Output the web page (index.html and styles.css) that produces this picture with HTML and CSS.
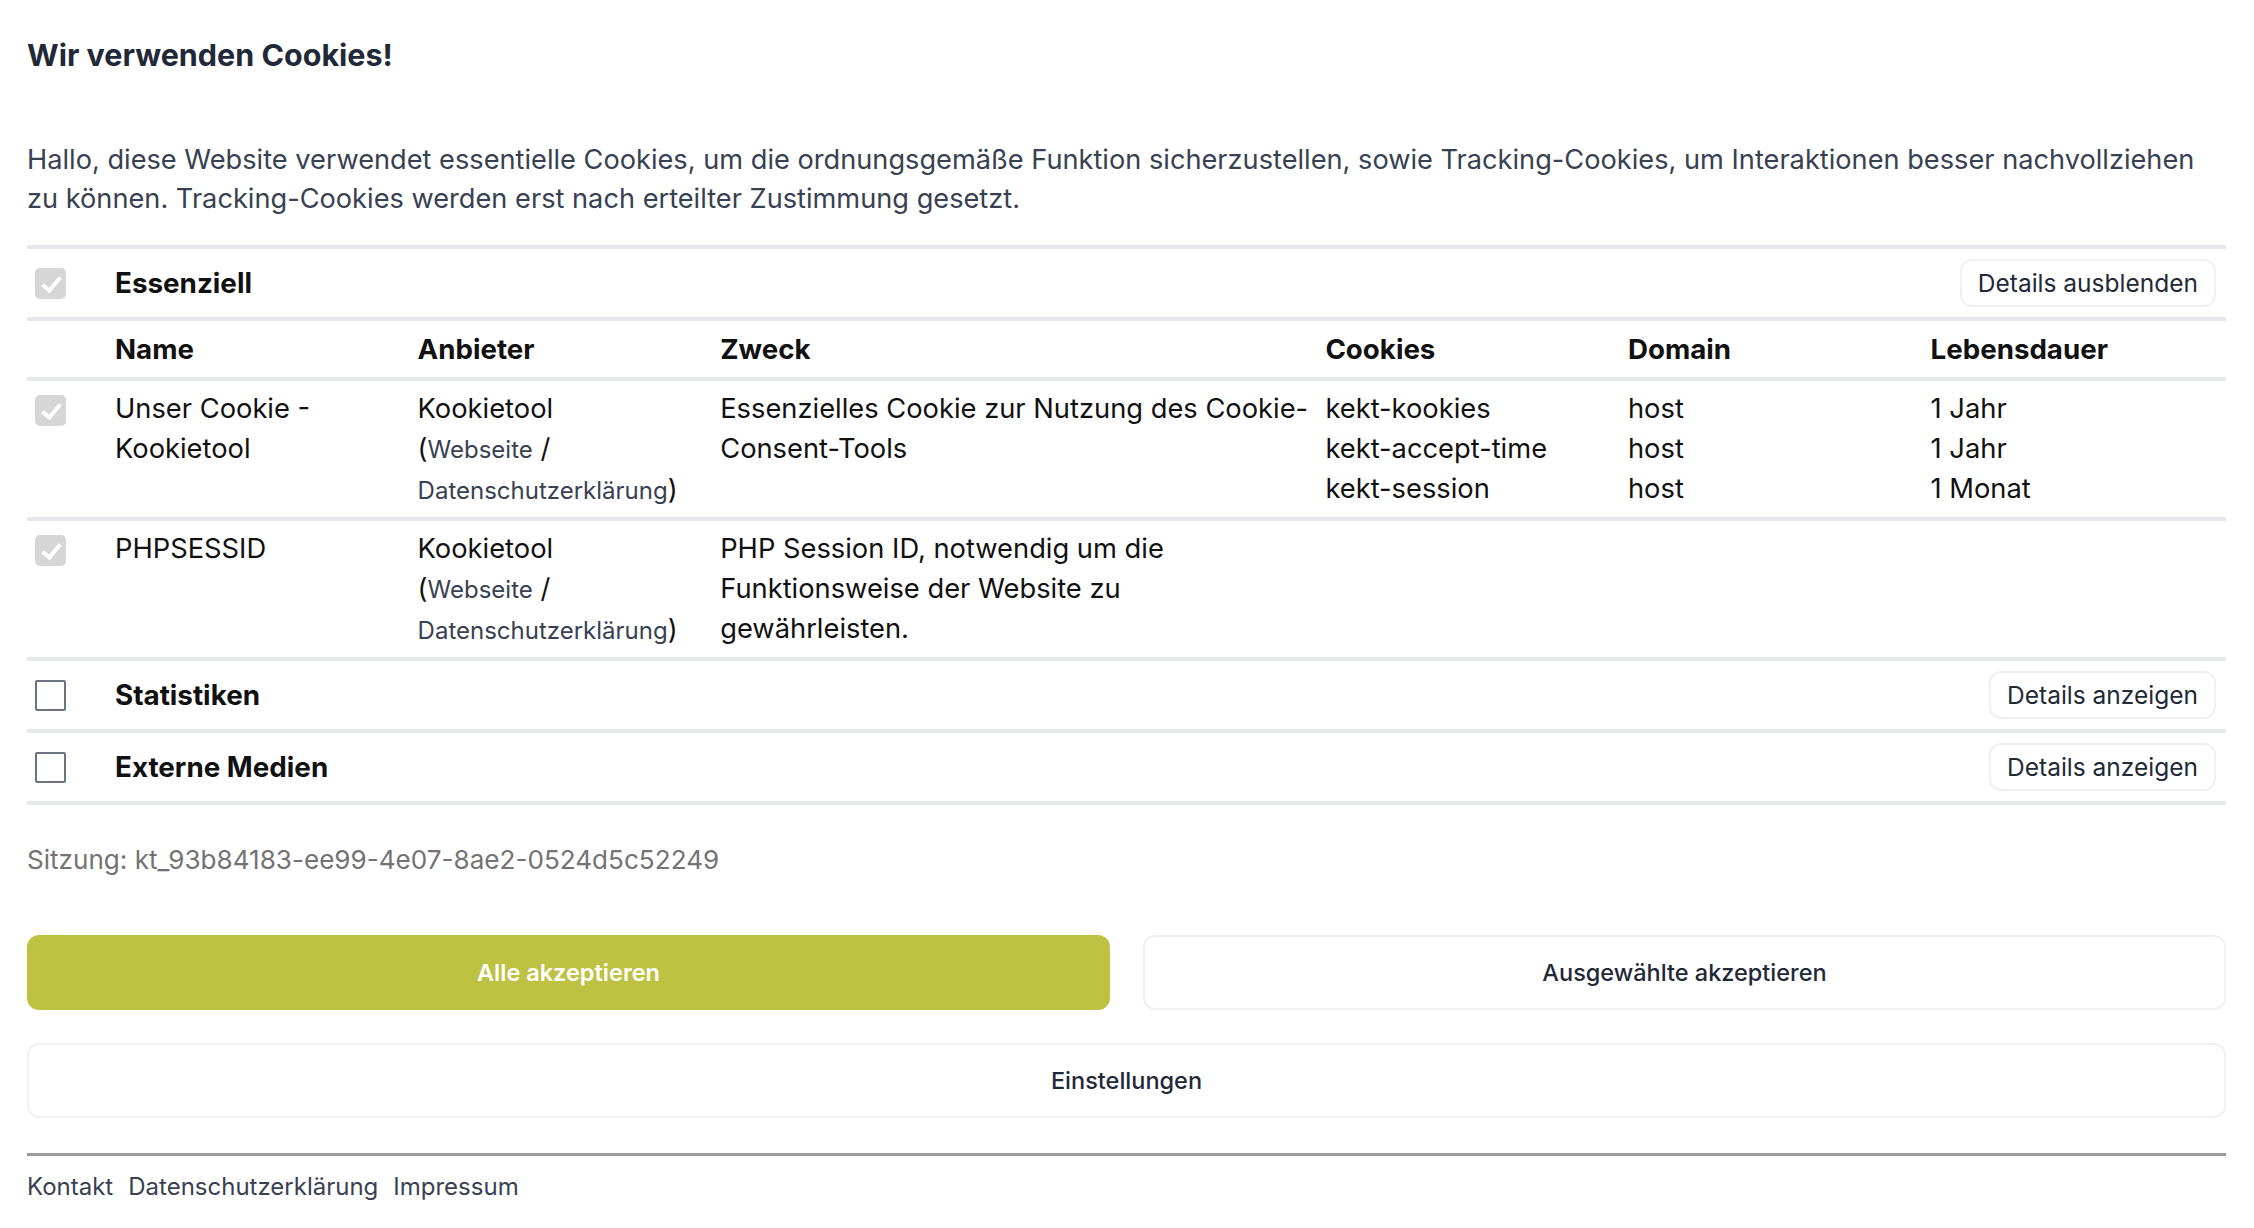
FILE: index.html
```html
<!DOCTYPE html>
<html lang="de">

<head>
    <meta charset="UTF-8">
    <meta name="viewport" content="width=device-width, initial-scale=1.0">
    <title>Cookie-Einstellungen</title>
    <link rel="stylesheet" href="styles.css">
</head>

<body>
    <div class="banner">
        <h2 class="title">Wir verwenden Cookies!</h2>
        <p class="intro">
            Hallo, diese Website verwendet essentielle Cookies, um die ordnungsgemäße Funktion sicherzustellen, sowie Tracking-Cookies, um Interaktionen besser nachvollziehen zu können. Tracking-Cookies werden erst nach erteilter Zustimmung gesetzt.
        </p>

        <div class="groups">
            <!-- Essenziell -->
            <div class="group">
                <span class="check checked"></span>
                <div class="group-name">Essenziell</div>
                <button class="btn-details">Details ausblenden</button>
            </div>

            <div class="cookie-row head">
                <div></div>
                <div>Name</div>
                <div>Anbieter</div>
                <div class="wide">Zweck</div>
                <div>Cookies</div>
                <div>Domain</div>
                <div>Lebensdauer</div>
            </div>

            <div class="cookie-row">
                <div><span class="check checked"></span></div>
                <div>Unser Cookie - Kookietool</div>
                <div>Kookietool<br>(<a href="#">Webseite</a> / <a href="#">Datenschutzerklärung</a>)</div>
                <div class="wide">Essenzielles Cookie zur Nutzung des Cookie-Consent-Tools</div>
                <div>kekt-kookies<br>kekt-accept-time<br>kekt-session</div>
                <div>host<br>host<br>host</div>
                <div>1 Jahr<br>1 Jahr<br>1 Monat</div>
            </div>

            <div class="cookie-row">
                <div><span class="check checked"></span></div>
                <div>PHPSESSID</div>
                <div>Kookietool<br>(<a href="#">Webseite</a> / <a href="#">Datenschutzerklärung</a>)</div>
                <div class="wide">PHP Session ID, notwendig um die Funktionsweise der Website zu gewährleisten.</div>
                <div></div>
                <div></div>
                <div></div>
            </div>

            <!-- Statistiken -->
            <div class="group">
                <span class="check"></span>
                <div class="group-name">Statistiken</div>
                <button class="btn-details">Details anzeigen</button>
            </div>

            <!-- Externe Medien -->
            <div class="group">
                <span class="check"></span>
                <div class="group-name">Externe Medien</div>
                <button class="btn-details">Details anzeigen</button>
            </div>
        </div>

        <p class="session">Sitzung: kt_93b84183-ee99-4e07-8ae2-0524d5c52249</p>

        <div class="actions">
            <button class="btn btn-primary">Alle akzeptieren</button>
            <button class="btn">Ausgewählte akzeptieren</button>
        </div>
        <button class="btn btn-full">Einstellungen</button>

        <div class="footer">
            <a href="#">Kontakt</a>
            <a href="#">Datenschutzerklärung</a>
            <a href="#">Impressum</a>
        </div>
    </div>
</body>

</html>
```

FILE: styles.css
```css
body {
    margin: 0;
    background-color: white;
    font-family: Inter, "Noto Sans", sans-serif;
}

.banner {
    padding: 36px 28px 20px 27px;
}

.title {
    margin: 0;
    font-size: 30.5px;
    font-weight: 700;
    line-height: 37px;
    color: #1f2937;
}

.intro {
    margin: 67px 0 0 0;
    font-size: 27.2px;
    line-height: 39px;
    color: #374151;
}

.groups {
    margin-top: 27px;
    border-top: 4px solid #e5e7eb;
}

.group {
    display: flex;
    align-items: center;
    height: 68px;
    border-bottom: 4px solid #e5e7eb;
}

.group-name {
    flex: 1;
    margin-left: 49px;
    font-size: 27.8px;
    font-weight: 700;
    color: #111;
}

/* checkboxes */
.check {
    display: inline-block;
    box-sizing: border-box;
    width: 31px;
    height: 31px;
    margin-left: 8px;
    border: 2px solid #6b7280;
    border-radius: 2px;
    background-color: white;
    position: relative;
}

.check.checked {
    border: none;
    border-radius: 5px;
    background-color: #d6d6d6;
}

.check.checked::after {
    content: "";
    position: absolute;
    left: 11px;
    top: 5px;
    width: 7px;
    height: 15px;
    border-right: 4px solid white;
    border-bottom: 4px solid white;
    transform: rotate(40deg);
}

.btn-details {
    margin-right: 10px;
    padding: 0 16px;
    height: 48px;
    background-color: white;
    border: 2px solid #f1f1f3;
    border-radius: 12px;
    font-family: inherit;
    font-size: 24.5px;
    color: #1f2937;
}

/* cookie table */
.cookie-row {
    display: grid;
    grid-template-columns: 88px repeat(6, 302.6px) 1fr;
    padding: 8px 0 6px 0;
    border-bottom: 4px solid #e5e7eb;
    font-size: 27.3px;
    line-height: 40px;
    color: #111;
}

.cookie-row>div {
    padding-right: 12px;
}

.cookie-row>div:first-child {
    padding-top: 6px;
}

.cookie-row .wide {
    grid-column: span 2;
}

.cookie-row.head {
    padding: 8px 0;
    font-weight: 700;
    font-size: 27.7px;
}

.cookie-row a {
    color: #374151;
    font-size: 24px;
    text-decoration: none;
}

.session {
    margin: 35px 0 0 0;
    font-size: 26.1px;
    line-height: 39px;
    color: #737373;
}

/* buttons */
.actions {
    display: flex;
    gap: 33px;
    margin-top: 56px;
}

.btn {
    flex: 1;
    height: 75px;
    background-color: white;
    border: 2px solid #f1f1f3;
    border-radius: 12px;
    font-family: inherit;
    font-size: 23.5px;
    font-weight: 500;
    color: #1f2937;
}

.btn-primary {
    background-color: #bdc242;
    border-color: #bdc242;
    color: white;
    font-weight: 600;
}

.btn-full {
    display: block;
    width: 100%;
    margin-top: 33px;
}

.footer {
    margin-top: 35px;
    padding-top: 14px;
    border-top: 3px solid #9b9b9b;
    display: flex;
    gap: 15px;
}

.footer a {
    font-size: 24px;
    line-height: 34px;
    color: #374151;
    text-decoration: none;
}
```
